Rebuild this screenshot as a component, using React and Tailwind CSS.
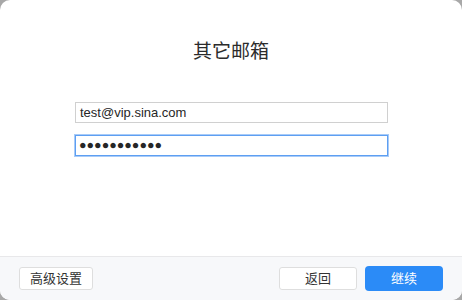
import React from "react";

const font = { fontFamily: '"Liberation Sans", "Noto Sans CJK SC", sans-serif' };

export default function App() {
  return (
    <div className="w-[462px] h-[300px] bg-[#a8a8a8]" style={font}>
      <div className="w-full h-full rounded-[10px] overflow-hidden bg-white flex flex-col">
        <div className="flex-1 flex flex-col items-center">
          <h1 className="mt-[39px] text-[19px] leading-[26px] text-[#2b2b2b] font-normal">其它邮箱</h1>
          <div className="mt-[37px] ml-[1px] w-[313px] flex flex-col gap-[12px]">
            <div className="h-[21px] w-full border border-[#d0d0d0] bg-white px-[4px] text-[13px] leading-[19px] text-[#262626]">
              test@vip.sina.com
            </div>
            <div className="h-[21px] w-full border border-[#5d9ff2] shadow-[0_0_0_1px_#a8cbf8] bg-white px-[3px] text-[12.5px] leading-[19px] text-[#262626]">
              ●●●●●●●●●●●
            </div>
          </div>
        </div>
        <div className="h-[44px] shrink-0 border-t border-[#e8e8ea] bg-[#f7f8fa] flex items-center px-[19px]">
          <button className="h-[23px] w-[74px] rounded-[3px] border border-[#dedede] bg-white text-[13px] text-[#333]">
            高级设置
          </button>
          <div className="flex-1" />
          <button className="h-[23px] w-[78px] rounded-[3px] border border-[#dedede] bg-white text-[13px] text-[#333]">
            返回
          </button>
          <button className="ml-[8px] h-[25px] w-[78px] rounded-[4px] bg-[#2b8bf7] text-[13px] text-white">
            继续
          </button>
        </div>
      </div>
    </div>
  );
}
